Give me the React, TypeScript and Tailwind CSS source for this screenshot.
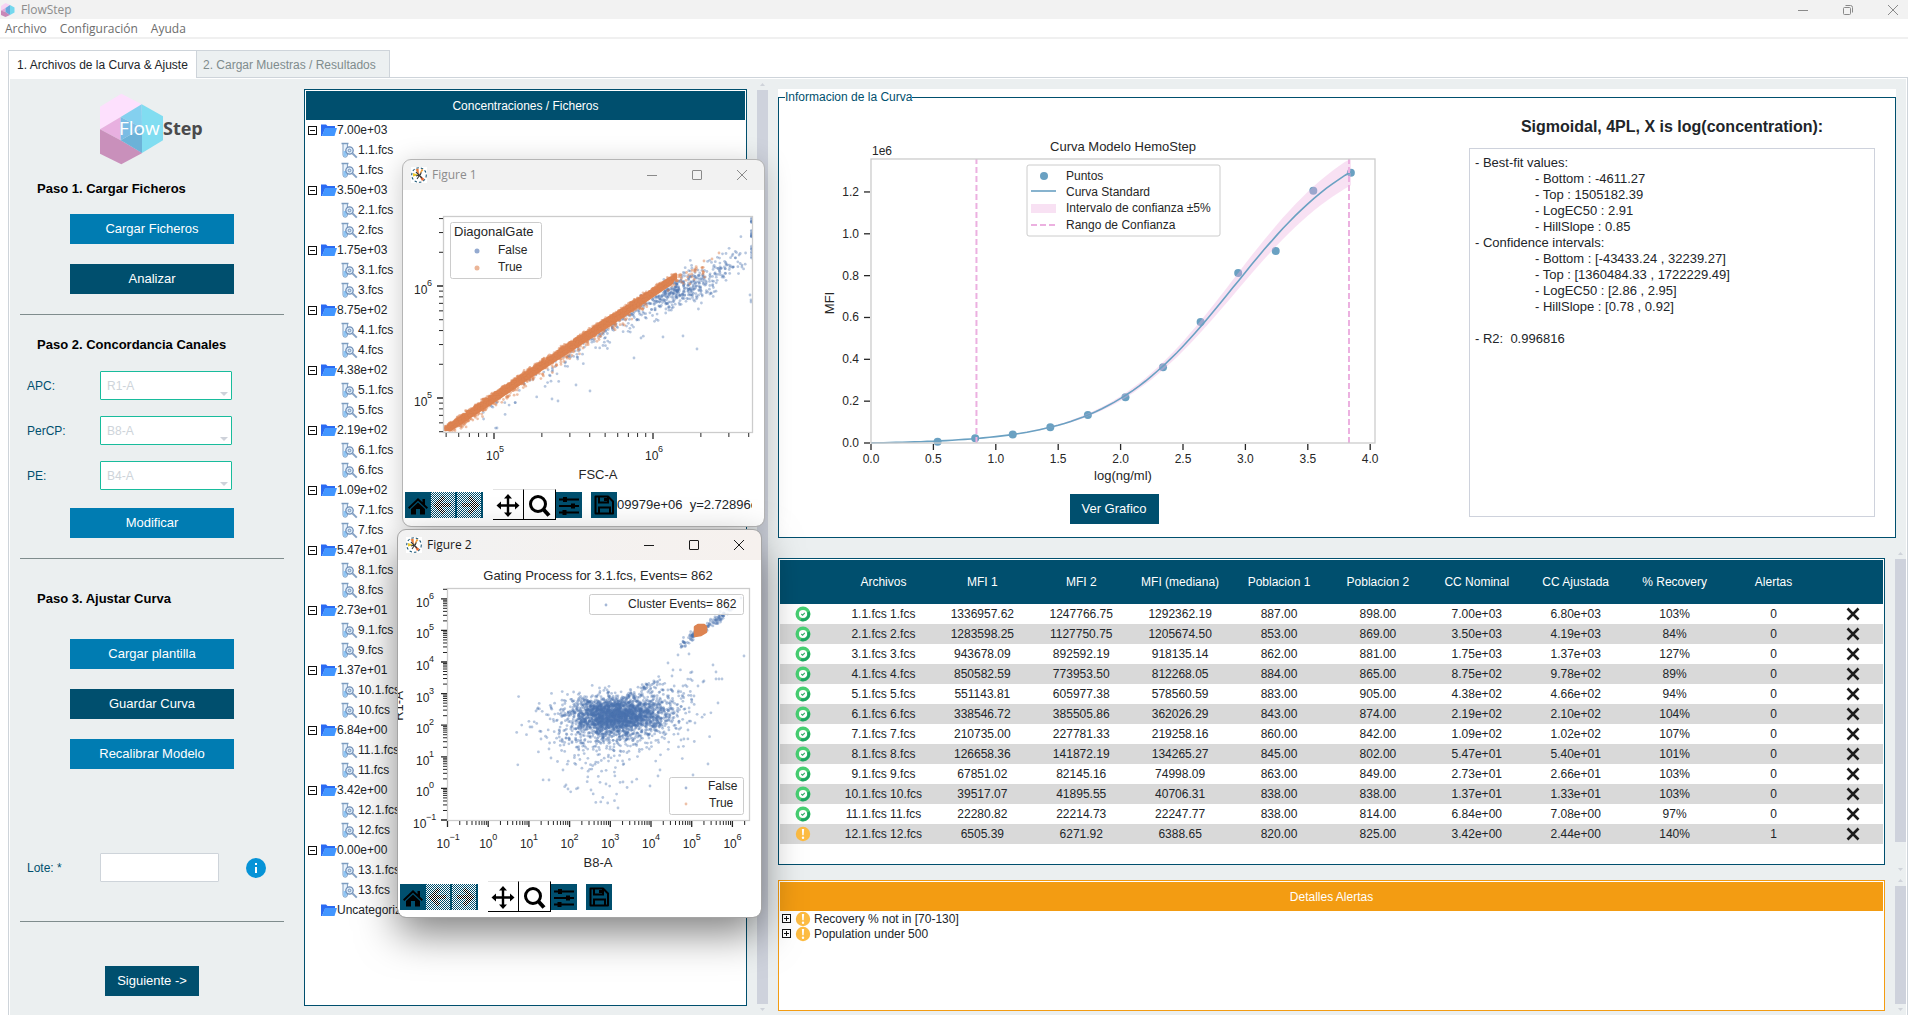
import React from 'react';

const tree = [
    { conc: '7.00e+03', files: ['1.1.fcs', '1.fcs'] },
    { conc: '3.50e+03', files: ['2.1.fcs', '2.fcs'] },
    { conc: '1.75e+03', files: ['3.1.fcs', '3.fcs'] },
    { conc: '8.75e+02', files: ['4.1.fcs', '4.fcs'] },
    { conc: '4.38e+02', files: ['5.1.fcs', '5.fcs'] },
    { conc: '2.19e+02', files: ['6.1.fcs', '6.fcs'] },
    { conc: '1.09e+02', files: ['7.1.fcs', '7.fcs'] },
    { conc: '5.47e+01', files: ['8.1.fcs', '8.fcs'] },
    { conc: '2.73e+01', files: ['9.1.fcs', '9.fcs'] },
    { conc: '1.37e+01', files: ['10.1.fcs', '10.fcs'] },
    { conc: '6.84e+00', files: ['11.1.fcs', '11.fcs'] },
    { conc: '3.42e+00', files: ['12.1.fcs', '12.fcs'] },
    { conc: '0.00e+00', files: ['13.1.fcs', '13.fcs'] },
];

const columns = ['Archivos', 'MFI 1', 'MFI 2', 'MFI (mediana)', 'Poblacion 1', 'Poblacion 2', 'CC Nominal', 'CC Ajustada', '% Recovery', 'Alertas'];

const rows = [
    ['1.1.fcs 1.fcs', '1336957.62', '1247766.75', '1292362.19', '887.00', '898.00', '7.00e+03', '6.80e+03', '103%', '0'],
    ['2.1.fcs 2.fcs', '1283598.25', '1127750.75', '1205674.50', '853.00', '869.00', '3.50e+03', '4.19e+03', '84%', '0'],
    ['3.1.fcs 3.fcs', '943678.09', '892592.19', '918135.14', '862.00', '881.00', '1.75e+03', '1.37e+03', '127%', '0'],
    ['4.1.fcs 4.fcs', '850582.59', '773953.50', '812268.05', '884.00', '865.00', '8.75e+02', '9.78e+02', '89%', '0'],
    ['5.1.fcs 5.fcs', '551143.81', '605977.38', '578560.59', '883.00', '905.00', '4.38e+02', '4.66e+02', '94%', '0'],
    ['6.1.fcs 6.fcs', '338546.72', '385505.86', '362026.29', '843.00', '874.00', '2.19e+02', '2.10e+02', '104%', '0'],
    ['7.1.fcs 7.fcs', '210735.00', '227781.33', '219258.16', '860.00', '842.00', '1.09e+02', '1.02e+02', '107%', '0'],
    ['8.1.fcs 8.fcs', '126658.36', '141872.19', '134265.27', '845.00', '802.00', '5.47e+01', '5.40e+01', '101%', '0'],
    ['9.1.fcs 9.fcs', '67851.02', '82145.16', '74998.09', '863.00', '849.00', '2.73e+01', '2.66e+01', '103%', '0'],
    ['10.1.fcs 10.fcs', '39517.07', '41895.55', '40706.31', '838.00', '838.00', '1.37e+01', '1.33e+01', '103%', '0'],
    ['11.1.fcs 11.fcs', '22280.82', '22214.73', '22247.77', '838.00', '814.00', '6.84e+00', '7.08e+00', '97%', '0'],
    ['12.1.fcs 12.fcs', '6505.39', '6271.92', '6388.65', '820.00', '825.00', '3.42e+00', '2.44e+00', '140%', '1'],
];

const fitReport = `- Best-fit values:
\t- Bottom : -4611.27
\t- Top : 1505182.39
\t- LogEC50 : 2.91
\t- HillSlope : 0.85
- Confidence intervals:
\t- Bottom : [-43433.24 , 32239.27]
\t- Top : [1360484.33 , 1722229.49]
\t- LogEC50 : [2.86 , 2.95]
\t- HillSlope : [0.78 , 0.92]

- R2:  0.996816`;

/* ---------- icons ---------- */

const AppIcon = () => (
    <svg width="14" height="14" viewBox="0 0 14 14" className="shrink-0">
        <path d="M0 3 4.500 0 9 2 4.500 5 0 7.500Z" fill="#f7d3f3" />
        <path d="M0 7.500 4.500 5V9Z" fill="#e2a5d8" />
        <path d="M0 7.500 4.500 9 9 12 4.500 14 0 12Z" fill="#c888b8" />
        <path d="M9 2 13.500 4.500V9.500L9 12Z" fill="#74d8ee" />
        <path d="M9 2V12L4.500 9V5Z" fill="#68a9dc" />
    </svg>
);

const Logo = () => (
    <svg width="105" height="72" viewBox="0 0 105 72" role="img" aria-label="FlowStep" className="mx-auto block">
        <path d="M0 13.700 21.300.7 41.700 11.300 20.700 24 0 36.300Z" fill="#fde0fd" />
        <path d="M0 36.300 20.700 24V47.300Z" fill="#e8b0e0" />
        <path d="M0 36.300 20.700 47.300 42.300 60 21.300 71.300 0 60.700Z" fill="#c990bb" />
        <path d="M41.700 11.300 63 23.300V47.300L42 60Z" fill="#81ddf1" />
        <path d="M41.700 11.300 20.700 24 42 35Z" fill="#84d0ef" />
        <path d="M20.700 24V47.300L42 35Z" fill="#7abce4" />
        <path d="M20.700 47.300 42 60V35Z" fill="#6cb2d8" />
        <text x="19" y="42" fontSize="19" fill="#fff" className="font-['Open_Sans',sans-serif]">Flow</text>
        <text x="63" y="42" fontSize="18" fontWeight="700" fill="#4a4a4c" className="font-['Open_Sans',sans-serif]">Step</text>
    </svg>
);

const FolderIcon = () => (
    <svg width="16" height="14" viewBox="0 0 16 14" className="shrink-0">
        <path d="M0 1.500h5l1.500 1.500H14v3H4L1 13H0Z" fill="#2b6bf3" />
        <path d="M4 5h12l-2.500 8H1Z" fill="#4296ff" />
    </svg>
);

const FileIcon = () => (
    <svg width="17" height="17" viewBox="0 0 17 17" fill="none" className="shrink-0">
        <path d="M2 2v11a2.200 2.200 0 0 0 4.400 0V2" fill="#e9f3fc" stroke="#7c9cc0" />
        <path d="M2.500 9h3.400v4a1.700 1.700 0 0 1-3.400 0Z" fill="#8fc6f5" />
        <path d="M.5 1.500h7" stroke="#7c9cc0" strokeWidth="1.500" />
        <circle cx="8.500" cy="8.500" r="3.700" fill="#dcebf8" stroke="#7290b8" strokeWidth="1.300" />
        <circle cx="8.500" cy="8.500" r="1.300" stroke="#7290b8" />
        <path d="m11.300 11.300 4.500 4.300" stroke="#88a4c6" strokeWidth="2" />
    </svg>
);

const PlusMinus = ({ open, label }: { open: boolean; label: string }) => (
    <button type="button" aria-label={label} aria-expanded={open} className="block size-[9px] shrink-0">
        <svg width="9" height="9" viewBox="0 0 9 9" fill="none" stroke="#111" shapeRendering="crispEdges" className="block">
            <rect x=".5" y=".5" width="8" height="8" fill="#fff" />
            <path d={open ? 'M2 4.500h5' : 'M2 4.500h5M4.500 2v5'} />
        </svg>
    </button>
);

const OkIcon = () => (
    <svg width="16" height="16" viewBox="0 0 16 16" fill="none" role="img" aria-label="OK" className="block">
        <circle cx="8" cy="8" r="5.800" fill="#fff" stroke="#48cf72" strokeWidth="3.400" />
        <path d="M13.400 6A5.800 5.800 0 0 1 6 13.500" stroke="#1fa463" strokeWidth="2.600" />
        <path d="m6.300 8 1.300 1.200 2.200-2.300" stroke="#2fae69" strokeWidth="1.100" />
    </svg>
);

const WarnIcon = () => (
    <svg width="16" height="16" viewBox="0 0 16 16" role="img" aria-label="Alerta" className="block shrink-0">
        <circle cx="8" cy="8" r="7.200" fill="#fdbc43" />
        <path d="M6.900 3h2.200l-.4 6.200H7.300Z" fill="#fff" />
        <circle cx="8" cy="11.700" r="1.200" fill="#fff" />
    </svg>
);

const MatplotlibIcon = () => (
    <svg width="16" height="16" viewBox="0 0 16 16" fill="none" className="shrink-0">
        <rect width="16" height="16" fill="#fff" />
        <circle cx="8" cy="8" r="7.300" stroke="#1d5878" strokeWidth="1.100" strokeDasharray="2.500 2" />
        <path d="M8 8 4.500 2.500l3-1Z" fill="#ea7a35" />
        <path d="M8 8 2 6v3.500Z" fill="#e9c72d" />
        <path d="m8 8 4.500-5L10.500 2Z" fill="#f0a03c" />
        <path d="m8 8 5.500 4-2.500 2Z" fill="#e2622e" />
        <path d="m5 5 6 6M10.500 5.500 6 12M5 9l5-1.500" stroke="#3a3a3a" strokeWidth="1.100" />
    </svg>
);

const WindowButtons = ({ color, maximized = false }: { color: string; maximized?: boolean }) => (
    <div className="flex items-center gap-[25px]">
        <button type="button" aria-label="Minimizar" className="w-5">
            <svg width="20" height="12" viewBox="0 0 20 12" stroke={color} shapeRendering="crispEdges"><path d="M5 6.500h10" /></svg>
        </button>
        <button type="button" aria-label="Maximizar" className="w-5">
            <svg width="20" height="12" viewBox="0 0 20 12" stroke={color} fill="none">
                {maximized ? (
                    <>
                        <rect x="5.500" y="3.500" width="7" height="7" rx="1" />
                        <path d="M7.500 1.500h5a2 2 0 0 1 2 2v5" />
                    </>
                ) : (
                    <rect x="5.500" y="1.500" width="9" height="9" rx=".5" />
                )}
            </svg>
        </button>
        <button type="button" aria-label="Cerrar" className="w-5">
            <svg width="20" height="12" viewBox="0 0 20 12" stroke={color}><path d="m5 1 10 10M15 1 5 11" /></svg>
        </button>
    </div>
);

/* ---------- small pieces ---------- */

const Button = ({ dark = false, className = 'w-[164px]', children }: { dark?: boolean; className?: string; children: React.ReactNode }) => (
    <button
        type="button"
        className={`mx-auto block h-[30px] text-[13px] text-white ${dark ? 'bg-[#004f6e]' : 'bg-[#007cb2]'} ${className}`}
    >
        {children}
    </button>
);

const Scrollbar = ({ thumbEnd = '' }: { thumbEnd?: string }) => (
    <div className="flex w-[11px] shrink-0 flex-col self-stretch">
        <svg width="11" height="11" viewBox="0 0 11 11" fill="#cfd3da"><path d="M3 7h5L5.500 4Z" /></svg>
        <div className="flex-1 bg-[#ced2dc]" />
        <div className={thumbEnd} />
        <svg width="11" height="11" viewBox="0 0 11 11" fill="#cfd3da"><path d="M3 4h5L5.500 7Z" /></svg>
    </div>
);

const ChannelSelect = ({ id, label, value }: { id: string; label: string; value: string }) => (
    <div className="flex items-center">
        <label htmlFor={id} className="w-20 pl-[7px] text-xs text-[#004f6e]">{label}</label>
        <div className="relative">
            <select
                id={id}
                disabled
                defaultValue={value}
                className="block h-[29px] w-[132px] appearance-none rounded-[1px] border border-[#18bc9c] bg-white pl-1.5 text-xs text-[#ced4da] opacity-100"
            >
                <option>R1-A</option>
                <option>B8-A</option>
                <option>B4-A</option>
            </select>
            <svg width="8" height="4" viewBox="0 0 8 4" fill="#ced2da" className="absolute right-1 bottom-1"><path d="M0 0h8L4 4Z" /></svg>
        </div>
    </div>
);

/* ---------- charts ---------- */

const rng = (seed: number) => () => {
    seed = (seed * 1664525 + 1013904223) % 4294967296;
    return seed / 4294967296;
};

const makeGauss = (rand: () => number) => () =>
    Math.sqrt(-2 * Math.log(rand() + 1e-9)) * Math.cos(2 * Math.PI * rand());

type Pt = [number, number];

const Dots = ({ pts, fill, opacity = 0.4 }: { pts: Pt[]; fill: string; opacity?: number }) => (
    <g fill={fill} fillOpacity={opacity}>
        {pts.map(([x, y], i) => <circle key={i} cx={x.toFixed(1)} cy={y.toFixed(1)} r="1.4" />)}
    </g>
);

const model = (x: number) => -4611.27 + (1505182.39 + 4611.27) / (1 + Math.pow(10, (2.91 - x) * 0.85));
const cx = (v: number) => 50 + v * 124.8;
const cy = (v: number) => 303 - (v / 1e6) * 209.2;

const CurveChart = () => {
    const xs = Array.from({ length: 78 }, (_, i) => Math.min(i * 0.05, 3.845));
    const line = (k: number) => xs.map((x) => `${cx(x).toFixed(1)},${Math.max(19, cy(model(x) * k)).toFixed(1)}`);
    return (
        <svg width="586" height="348" viewBox="0 0 586 348" className="mx-auto block text-xs" fill="#262626">
            <text x="302" y="11" fontSize="13" textAnchor="middle">Curva Modelo HemoStep</text>
            <text x="51" y="15">1e6</text>
            {rows.map((r, i) => (
                <circle key={r[0]} cx={cx(Math.log10(7000 / Math.pow(2, i)))} cy={cy(Number(r[3]))} r="4" fill="#6aa1c2" />
            ))}
            <polygon points={[...line(1.05), ...line(0.95).reverse()].join(' ')} fill="#ecb0e0" fillOpacity=".38" />
            <polyline points={line(1).join(' ')} fill="none" stroke="#6aa1c2" strokeWidth="1.600" />
            <path d={`M${cx(0.845)} 303V19M${cx(3.83)} 303V19`} stroke="#ecb0e0" strokeWidth="2" strokeDasharray="6 3" />
            <rect x="50" y="19" width="504" height="284" fill="none" stroke="#ccc" strokeWidth="1.300" />
            {[0, 0.5, 1, 1.5, 2, 2.5, 3, 3.5, 4].map((v) => (
                <g key={v}>
                    <path d={`M${cx(v)} 304v6`} stroke="#262626" strokeWidth="1.300" />
                    <text x={cx(v)} y="323" textAnchor="middle">{v.toFixed(1)}</text>
                </g>
            ))}
            {[0, 0.2, 0.4, 0.6, 0.8, 1, 1.2].map((v) => (
                <g key={v}>
                    <path d={`M49 ${cy(v * 1e6)}h-6`} stroke="#262626" strokeWidth="1.300" />
                    <text x="38" y={cy(v * 1e6) + 4} textAnchor="end">{v.toFixed(1)}</text>
                </g>
            ))}
            <text x="302" y="340" fontSize="13" textAnchor="middle">log(ng/ml)</text>
            <text transform="translate(13 163) rotate(-90)" fontSize="13" textAnchor="middle">MFI</text>
            <rect x="206" y="25" width="193" height="71" rx="2" fill="#fff" fillOpacity=".8" stroke="#ccc" />
            <circle cx="223" cy="36" r="4" fill="#6aa1c2" />
            <path d="M210 51h25" stroke="#6aa1c2" strokeWidth="1.600" />
            <rect x="210" y="64" width="25" height="9" fill="#ecb0e0" fillOpacity=".38" />
            <path d="M210 85h25" stroke="#ecb0e0" strokeWidth="2" strokeDasharray="6 3" />
            <text x="245" y="40">Puntos</text>
            <text x="245" y="56">Curva Standard</text>
            <text x="245" y="72">Intervalo de confianza ±5%</text>
            <text x="245" y="89">Rango de Confianza</text>
        </svg>
    );
};

// "10" with a raised exponent
const Pow = ({ x, y, e }: { x: number; y: number; e: string }) => (
    <>
        <text x={x} y={y} fontSize="12">10</text>
        <text x={x + 13} y={y - 8} fontSize="9">{e}</text>
    </>
);

const minorTicks = (decades: number[], pos: (log: number) => number, lo: number, hi: number) =>
    decades.flatMap((d) => [2, 3, 4, 5, 6, 7, 8, 9].map((m) => pos(d + Math.log10(m)))).filter((p) => p >= lo && p <= hi);

const fig1 = (() => {
    const rand = rng(11);
    const gauss = makeGauss(rand);
    const inside = ([x, y]: Pt) => x > 41 && x < 349 && y > 28 && y < 241;
    const axis = (x: number) => 239 - (x - 42) * 0.662 - Math.sin(((x - 42) / 230) * Math.PI) * 1.5;
    const orange: Pt[] = [];
    const blue: Pt[] = [];
    for (let i = 0; i < 2600; i++) {
        const x = 42 + rand() * 231;
        orange.push([x, axis(x) + gauss() * 1.5]);
    }
    for (let i = 0; i < 650; i++) {
        const x = 44 + rand() * 200;
        orange.push([x, axis(x) + 3 - Math.log(rand() + 0.01) * 3]);
    }
    for (let i = 0; i < 45; i++) {
        const x = 262 + rand() * 40;
        orange.push([x, axis(x) + 1 + gauss() * 4 + (x - 262) * 0.25]);
    }
    orange.push([316, 63], [309, 69], [301, 71]);
    for (let i = 0; i < 210; i++) {
        const x = 66 + Math.sqrt(rand()) * 210;
        blue.push([x, axis(x) + 7 - Math.log(rand() + 0.01) * 7]);
    }
    for (let i = 0; i < 330; i++) {
        const x = 283 + gauss() * 19;
        blue.push([x, 98 - (x - 283) * 0.36 + gauss() * 8]);
    }
    for (let i = 0; i < 50; i++) {
        const x = 305 + rand() * 38;
        blue.push([x, 80 - (x - 305) * 0.3 + gauss() * 10]);
    }
    for (let i = 0; i < 26; i++) blue.push([348.5, 28 + rand() * 42]);
    blue.push([149, 209], [155, 211], [187, 201], [231, 168], [238, 148], [260, 147], [280, 146], [294, 159], [173, 195], [94, 238], [348, 110], [348, 112], [347, 105]);
    return { orange: orange.filter(inside), blue: blue.filter(inside) };
})();

const fig2 = (() => {
    const rand = rng(29);
    const gauss = makeGauss(rand);
    const inside = ([x, y]: Pt) => x > 50 && x < 351 && y > 29 && y < 259;
    const pts: Pt[] = [];
    for (let i = 0; i < 2100; i++) pts.push([218 + gauss() * 24, 155 + gauss() * 9]);
    for (let i = 0; i < 380; i++) pts.push([214 + gauss() * 36, 160 + gauss() * 12]);
    for (let i = 0; i < 230; i++) pts.push([205 + gauss() * 28, 172 - Math.log(rand() + 0.01) * 17]);
    for (let i = 0; i < 110; i++) {
        const x = 235 + rand() * 60;
        pts.push([x, 150 - (x - 235) * 0.3 + gauss() * 9]);
    }
    for (let i = 0; i < 45; i++) {
        const x = 228 + rand() * 34;
        pts.push([x, 136 - (x - 228) * 0.45 + gauss() * 3]);
    }
    for (let i = 0; i < 120; i++) {
        const t = rand();
        pts.push([292 + t * 34, 77 - t * 22 + gauss() * 2]);
    }
    for (let i = 0; i < 14; i++) {
        const t = rand();
        pts.push([324 + t * 14, 56 - t * 11 + gauss() * 1.5]);
    }
    for (let i = 0; i < 34; i++) {
        const t = rand();
        pts.push([282 + t * 18, 86 - t * 14 + gauss() * 2.5]);
    }
    pts.push(
        [132, 167], [134, 167], [140, 148], [138, 151], [143, 179], [151, 189], [153, 198], [151, 220], [165, 210], [168, 225], [170, 229],
        [180, 228], [193, 230], [208, 224], [220, 248], [225, 222], [234, 222], [252, 226], [260, 216], [295, 215], [310, 204], [262, 210],
        [270, 103], [274, 116], [275, 110], [294, 112], [315, 105], [318, 112], [318, 119], [321, 119], [324, 119], [346, 96], [320, 143],
        [296, 136], [297, 163], [290, 170], [283, 180], [280, 95], [291, 94], [343, 38], [305, 122], [300, 126], [306, 121]
    );
    return pts.filter(inside);
})();

const Figure1Plot = () => {
    const px = (l: number) => 91 + (l - 5) * 159;
    const py = (l: number) => 208 - (l - 5) * 112;
    return (
        <svg width="361" height="296" viewBox="0 0 361 296" fill="#262626" className="block text-xs">
            <Dots pts={fig1.blue} fill="#4c72b0" />
            <path d="M41 241 92 206 150 167 215 124 272 89l-2 5-53 36-65 42-58 39-46 30Z" fill="#dd8452" />
            <Dots pts={fig1.orange} fill="#dd8452" opacity={0.5} />
            <rect x="40.500" y="26.500" width="309" height="216" fill="none" stroke="#ccc" strokeWidth="1.300" />
            <path d={`M${px(5)} 243v6M${px(6)} 243v6M40 ${py(5)}h-6M40 ${py(6)}h-6`} stroke="#262626" strokeWidth="1.300" />
            {minorTicks([4, 5, 6], px, 41, 349).map((x) => <path key={x} d={`M${x} 243v4`} stroke="#262626" />)}
            {minorTicks([4, 5, 6], py, 27, 242).map((y) => <path key={y} d={`M40 ${y}h-4`} stroke="#262626" />)}
            <Pow x={83} y={270} e="5" />
            <Pow x={242} y={270} e="6" />
            <Pow x={11} y={216} e="5" />
            <Pow x={11} y={104} e="6" />
            <text x="195" y="289" fontSize="13" textAnchor="middle">FSC-A</text>
            <rect x="47.500" y="32.500" width="91" height="56" rx="2" fill="#fff" fillOpacity=".8" stroke="#ccc" />
            <text x="51" y="46" fontSize="13">DiagonalGate</text>
            <circle cx="74" cy="61" r="2.500" fill="#4c72b0" fillOpacity=".6" />
            <circle cx="74" cy="78" r="2.500" fill="#dd8452" fillOpacity=".6" />
            <text x="95" y="64">False</text>
            <text x="95" y="81">True</text>
        </svg>
    );
};

const Figure2Plot = () => {
    const px = (l: number) => 49.5 + (l + 1) * 40.7;
    const py = (l: number) => 260 - (l + 1) * 31.6;
    const exps = [-1, 0, 1, 2, 3, 4, 5, 6];
    const sup = (e: number) => (e < 0 ? '−1' : String(e));
    return (
        <svg width="363" height="318" viewBox="0 0 363 318" fill="#262626" className="block text-xs">
            <text x="200" y="20" fontSize="13" textAnchor="middle">Gating Process for 3.1.fcs, Events= 862</text>
            <Dots pts={fig2} fill="#4c72b0" />
            <path d="M297 67 300 65 306 65 308 67v5l-5 3-6 1Z" fill="#dd8452" stroke="#dd8452" strokeWidth="2.500" strokeLinejoin="round" />
            <rect x="49.500" y="28.500" width="302" height="232" fill="none" stroke="#ccc" strokeWidth="1.300" />
            {exps.map((e) => (
                <g key={e}>
                    <path d={`M${px(e)} 261v6M49 ${py(e)}h-6`} stroke="#262626" strokeWidth="1.300" />
                    <Pow x={px(e) - (e < 0 ? 11 : 9)} y={288} e={sup(e)} />
                    <Pow x={e < 0 ? 15 : 18} y={py(e) + 8} e={sup(e)} />
                </g>
            ))}
            {minorTicks(exps, px, 50, 352).map((x) => <path key={x} d={`M${x} 261v4`} stroke="#262626" />)}
            {minorTicks(exps, py, 28, 260).map((y) => <path key={y} d={`M49 ${y}h-4`} stroke="#262626" />)}
            <text x="200" y="307" fontSize="13" textAnchor="middle">B8-A</text>
            <text transform="translate(5 146) rotate(-90)" fontSize="13" textAnchor="middle">R1-A</text>
            <rect x="191.500" y="34.500" width="154" height="20" rx="2" fill="#fff" fillOpacity=".8" stroke="#ccc" />
            <circle cx="208" cy="45" r="1.400" fill="#4c72b0" fillOpacity=".5" />
            <text x="230" y="48">Cluster Events= 862</text>
            <rect x="271.500" y="217.500" width="74" height="37" rx="2" fill="#fff" fillOpacity=".8" stroke="#ccc" />
            <circle cx="288" cy="228" r="1.400" fill="#4c72b0" fillOpacity=".5" />
            <circle cx="288" cy="244" r="1.400" fill="#dd8452" fillOpacity=".5" />
            <text x="310" y="230">False</text>
            <text x="311" y="247">True</text>
        </svg>
    );
};

/* ---------- matplotlib windows ---------- */

const ToolArrow = ({ label, d }: { label: string; d: string }) => (
    <button type="button" disabled aria-label={label} className="relative size-[26px] border-r border-[#004f6e] bg-[#004f6e]">
        <svg width="25" height="26" viewBox="0 0 25 26" fill="none" stroke="#000" strokeWidth="4"><path d={d} /></svg>
        {/* stippled disabled look */}
        <span className="absolute inset-0 right-px bg-[repeating-conic-gradient(#fff_0_25%,transparent_0_50%)] bg-[length:2px_2px]" />
    </button>
);

const Toolbar = ({ message = '' }: { message?: string }) => (
    <div className="flex h-[31px] items-center pl-0.5">
        <button type="button" aria-label="Home" className="size-[26px] bg-[#004f6e]">
            <svg width="26" height="26" viewBox="0 0 26 26" fill="#000">
                <path d="M13 6 3 15.500l1.300 1.400L13 8.800l8.700 8.100 1.300-1.400-3-2.800V7h-2.500v3.300Z" />
                <path d="m13 10.500-7 6.500v5.500h5V17h4v5.500h5V17Z" />
            </svg>
        </button>
        <ToolArrow label="Back" d="M20 13H6M13 5l-8 8 8 8" />
        <ToolArrow label="Forward" d="M5 13h14M12 5l8 8-8 8" />
        <button type="button" aria-label="Pan" className="ml-2.5 h-[31px] w-[31px] border-t border-r border-b border-t-[#e3e3e3] border-r-black border-b-black bg-white">
            <svg width="30" height="28" viewBox="0 0 30 28" fill="#000">
                <path d="m15 3 4 4.500h-2.800v5.800H22v-2.800l4.500 4-4.500 4v-2.800h-5.800v5.800H19L15 26l-4-4.500h2.800v-5.800H8v2.800l-4.500-4 4.500-4v2.800h5.800V7.500H11Z" />
            </svg>
        </button>
        <button type="button" aria-label="Zoom" className="h-[31px] w-8 border-t border-r border-b border-t-[#e3e3e3] border-r-black border-b-black bg-white">
            <svg width="30" height="28" viewBox="0 0 30 28" fill="none" stroke="#000">
                <circle cx="14" cy="13" r="7.500" strokeWidth="3" />
                <path d="m19.500 18.500 5.500 6" strokeWidth="4" />
            </svg>
        </button>
        <button type="button" aria-label="Subplots" className="size-[26px] bg-[#004f6e]">
            <svg width="26" height="26" viewBox="0 0 26 26" stroke="#000" strokeWidth="1.800">
                <path d="M3 7.500h20M3 14h20M3 20.500h20" />
                <path d="M9 5v5M17 11.500v5M8.500 18v5" strokeWidth="4" />
            </svg>
        </button>
        <button type="button" aria-label="Save" className="ml-[9px] size-[26px] bg-[#004f6e]">
            <svg width="26" height="26" viewBox="0 0 26 26" fill="none" stroke="#000" strokeWidth="2">
                <path d="M4.500 4.500h12.500l5 5v12h-17.500Z" strokeLinejoin="round" />
                <path d="M8 4.500v6h9v-6M8 21.500v-6h11v6" />
                <path d="M13 6h3v3h-3Z" fill="#000" stroke="none" />
            </svg>
        </button>
        <span className="mr-3 flex-1 overflow-hidden text-[13px] whitespace-pre text-[#212529]">{message}</span>
    </div>
);

/* ---------- page ---------- */

export default function App() {
    return (
        <div className="relative flex min-h-screen flex-col bg-white font-['Liberation_Sans',Arial,sans-serif] text-xs text-[#212529]">
            <header className="font-['Open_Sans','Noto_Sans',sans-serif]">
                <div className="flex h-[19px] items-center bg-[#f2f2f2] pr-[5px] pl-px">
                    <AppIcon />
                    <h1 className="ml-1.5 text-xs leading-4 text-[#8c8c8c]">FlowStep</h1>
                    <div className="ml-auto flex h-3">
                        <WindowButtons color="#8a8a8a" maximized />
                    </div>
                </div>
                <nav className="flex h-5 items-center gap-[13px] border-b-2 border-[#f0f0f0] pt-0.5 pl-[5px] text-[#6d6d6d]">
                    <button type="button">Archivo</button>
                    <button type="button">Configuración</button>
                    <button type="button">Ayuda</button>
                </nav>
            </header>

            <div role="tablist" className="mt-[11px] flex h-[28px] pl-2">
                <button type="button" role="tab" aria-selected="true" className="z-10 w-[188px] border-t border-l border-[#ced4da] bg-white">
                    1. Archivos de la Curva &amp; Ajuste
                </button>
                <button type="button" role="tab" aria-selected="false" className="w-[194px] border border-[#ced4da] bg-[#ecf0f1] pt-px pl-1.5 text-left text-[#7f8c8d]">
                    2. Cargar Muestras / Resultados
                </button>
                <div className="flex-1 border-b border-[#ced4da]" />
            </div>

            <main className="ml-2 flex flex-1 border-r border-l border-[#ced4da] bg-white px-px pt-px">
                <div className="flex min-w-0 flex-1 bg-[#ebeff0]">
                    <section className="w-[294px] shrink-0 pt-[14px] pr-5 pl-2.5">
                        <Logo />
                        <h2 className="mt-[14px] pl-[17px] text-[13px] leading-5 font-bold text-black">Paso 1. Cargar Ficheros</h2>
                        <div className="mt-[15px] space-y-5">
                            <Button>Cargar Ficheros</Button>
                            <Button dark>Analizar</Button>
                        </div>
                        <hr className="mt-5 border-[#7f8c8d]" />

                        <h2 className="mt-5 pl-[17px] text-[13px] leading-5 font-bold text-black">Paso 2. Concordancia Canales</h2>
                        <div className="mt-4 space-y-4">
                            <ChannelSelect id="apc" label="APC:" value="R1-A" />
                            <ChannelSelect id="percp" label="PerCP:" value="B8-A" />
                            <ChannelSelect id="pe" label="PE:" value="B4-A" />
                        </div>
                        <div className="mt-[18px]">
                            <Button>Modificar</Button>
                        </div>
                        <hr className="mt-5 border-[#7f8c8d]" />

                        <h2 className="mt-[30px] pl-[17px] text-[13px] leading-5 font-bold text-black">Paso 3. Ajustar Curva</h2>
                        <div className="mt-[30px] space-y-5">
                            <Button>Cargar plantilla</Button>
                            <Button dark>Guardar Curva</Button>
                            <Button>Recalibrar Modelo</Button>
                        </div>

                        <div className="mt-[84px] flex items-center">
                            <label htmlFor="lote" className="w-20 pl-[7px] text-xs text-[#004f6e]">Lote: *</label>
                            <input id="lote" type="text" className="h-[29px] w-[119px] rounded-[1px] border border-[#ced4da] bg-white px-1.5" />
                            <button type="button" aria-label="Información" className="ml-[27px]">
                                <svg width="20" height="20" viewBox="0 0 20 20" className="block">
                                    <circle cx="10" cy="10" r="10" fill="#0693d7" />
                                    <path d="M9 5h2v2H9ZM9 9h2v6H9Z" fill="#fff" />
                                </svg>
                            </button>
                        </div>
                        <hr className="mt-[39px] border-[#7f8c8d]" />
                        <div className="mt-11">
                            <Button dark className="w-[94px]">Siguiente -&gt;</Button>
                        </div>
                    </section>

                    <section className="mt-2.5 mb-[9px] w-[443px] shrink-0 border border-[#004f6e] bg-white p-px">
                        <h2 className="bg-[#004f6e] pt-px text-center leading-7 text-white">Concentraciones / Ficheros</h2>
                        <ul>
                            {tree.map((node) => (
                                <li key={node.conc}>
                                    <div className="flex h-5 items-center pl-0.5">
                                        <PlusMinus open label={node.conc} />
                                        <span className="ml-1 flex items-center"><FolderIcon />{node.conc}</span>
                                    </div>
                                    <ul>
                                        {node.files.map((file) => (
                                            <li key={file} className="flex h-5 items-center pl-[35px]"><FileIcon />{file}</li>
                                        ))}
                                    </ul>
                                </li>
                            ))}
                            <li className="flex h-5 items-center pl-[15px]"><FolderIcon />Uncategorized</li>
                        </ul>
                    </section>

                    <div className="mx-2.5 flex">
                        <Scrollbar />
                    </div>

                    <div className="flex min-w-0 flex-1 flex-col">
                        <section className="mt-2.5 mr-2.5 bg-white">
                            <fieldset className="h-[449px] border border-[#004f6e]">
                                <legend className="ml-1.5 text-xs leading-4 text-[#004f6e]">Informacion de la Curva</legend>
                                <div className="flex">
                                    <div className="min-w-0 flex-1 pt-[35px]">
                                        <CurveChart />
                                        <div className="mt-1.5">
                                            <Button dark className="w-[89px]">Ver Grafico</Button>
                                        </div>
                                    </div>
                                    <div className="w-[446px] shrink-0 px-5 pt-3">
                                        <h2 className="text-center text-base leading-5 font-bold">Sigmoidal, 4PL, X is log(concentration):</h2>
                                        <textarea
                                            readOnly
                                            aria-label="Resultados del ajuste"
                                            defaultValue={fitReport}
                                            className="mt-[11px] block h-[369px] w-full resize-none border border-[#ced2dc] px-[5px] py-1.5 text-[13px] leading-4 [tab-size:60px]"
                                        />
                                    </div>
                                </div>
                            </fieldset>
                        </section>

                        <section className="mt-2.5 flex">
                            <div className="my-2.5 h-[307px] min-w-0 flex-1 border border-[#004f6e] bg-white p-px">
                                <table className="w-full table-fixed border-collapse text-center">
                                    <thead>
                                        <tr className="h-11 bg-[#004f6e] text-white">
                                            <th aria-label="Estado" className="w-[54px]" />
                                            {columns.map((c) => <th key={c} className="font-normal whitespace-nowrap">{c}</th>)}
                                            <th aria-label="Eliminar" className="w-[60px]" />
                                        </tr>
                                    </thead>
                                    <tbody>
                                        {rows.map((row) => (
                                            <tr key={row[0]} className="h-5 even:bg-[#d9d9d9]">
                                                <td className="p-0 pl-[15px]">{row[9] === '0' ? <OkIcon /> : <WarnIcon />}</td>
                                                {row.map((v, i) => <td key={i} className="p-0 whitespace-nowrap">{v}</td>)}
                                                <td className="p-0">
                                                    <button type="button" aria-label={`Eliminar ${row[0]}`} className="mx-auto block">
                                                        <svg width="14" height="14" viewBox="0 0 14 14" stroke="#1c1c1c" strokeWidth="2.600" className="block"><path d="m1.500 1.500 11 11M12.500 1.500l-11 11" /></svg>
                                                    </button>
                                                </td>
                                            </tr>
                                        ))}
                                    </tbody>
                                </table>
                            </div>
                            <div className="ml-2.5 flex">
                                <Scrollbar thumbEnd="h-[22px]" />
                            </div>
                        </section>

                        <section className="flex flex-1">
                            <div className="mt-[5px] mb-1 min-w-0 flex-1 border border-[#f39c12] bg-white p-px">
                                <h2 className="bg-[#f39c12] pt-px text-center leading-7 text-white">Detalles Alertas</h2>
                                <ul className="pl-0.5">
                                    {['Recovery % not in [70-130]', 'Population under 500'].map((alert) => (
                                        <li key={alert} className="flex h-[15px] items-center">
                                            <PlusMinus open={false} label={alert} />
                                            <span className="ml-1 flex items-center gap-[3px]"><WarnIcon />{alert}</span>
                                        </li>
                                    ))}
                                </ul>
                            </div>
                            <div className="ml-2.5 flex">
                                <Scrollbar />
                            </div>
                        </section>
                    </div>
                </div>
            </main>

            {/* floating figure windows */}
            <div role="dialog" aria-label="Figure 1" className="absolute top-[160px] left-[403px] z-20 w-[361px] overflow-hidden rounded-lg bg-white pb-1.5 shadow-[0_4px_28px_rgba(0,0,0,0.22)] outline outline-[#b5b5b5]">
                <div className="flex h-[30px] items-center bg-[#f2f2f2] pr-3 pl-2 font-['Open_Sans','Noto_Sans',sans-serif] text-[#8c8c8c]">
                    <MatplotlibIcon />
                    <span className="ml-[5px]">Figure 1</span>
                    <div className="ml-auto"><WindowButtons color="#8a8a8a" /></div>
                </div>
                <Figure1Plot />
                <div className="mt-[3px]"><Toolbar message="09979e+06  y=2.72896e" /></div>
            </div>

            <div role="dialog" aria-label="Figure 2" className="absolute top-[530px] left-[398px] z-30 w-[363px] overflow-hidden rounded-lg bg-white pb-[5px] shadow-[0_16px_40px_rgba(0,0,0,0.5)] outline outline-[#a5a5a5]">
                <div className="flex h-[30px] items-center bg-linear-to-r from-[#f2f2f2] to-[#f6f1ee] pr-3 pl-2 font-['Open_Sans','Noto_Sans',sans-serif] text-[#1a1a1a]">
                    <MatplotlibIcon />
                    <span className="ml-[5px]">Figure 2</span>
                    <div className="ml-auto"><WindowButtons color="#1a1a1a" /></div>
                </div>
                <Figure2Plot />
                <div className="mt-[3px]"><Toolbar /></div>
            </div>
        </div>
    );
}
